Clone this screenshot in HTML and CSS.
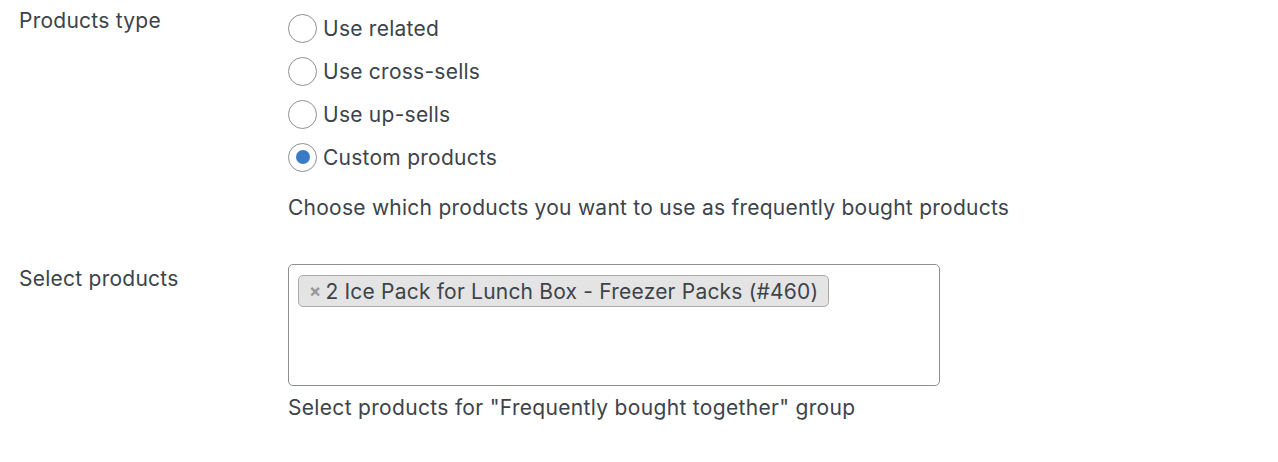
FILE: index.html
```html
<!DOCTYPE html>
<html>
<head>
<meta charset="utf-8">
<link rel="stylesheet" href="styles.css">
</head>
<body>
<div class="form">
  <div class="row row-type">
    <div class="label">Products type</div>
    <div class="field">
      <ul class="radios">
        <li><span class="radio"></span><span>Use related</span></li>
        <li><span class="radio"></span><span>Use cross-sells</span></li>
        <li><span class="radio"></span><span>Use up-sells</span></li>
        <li><span class="radio checked"></span><span>Custom products</span></li>
      </ul>
      <p class="desc desc-type">Choose which products you want to use as frequently bought products</p>
    </div>
  </div>
  <div class="row row-select">
    <div class="label">Select products</div>
    <div class="field">
      <div class="selectbox">
        <span class="tag"><span class="x">×</span>2 Ice Pack for Lunch Box - Freezer Packs (#460)</span>
      </div>
      <p class="desc desc-select">Select products for "Frequently bought together" group</p>
    </div>
  </div>
</div>
</body>
</html>
```

FILE: styles.css
```css
html, body {
  margin: 0;
  padding: 0;
  background: #fff;
}
body {
  font-family: Inter, "Liberation Sans", Arial, sans-serif;
  font-size: 21px;
  letter-spacing: 0.25px;
  color: #3c434a;
  width: 1278px;
  height: 462px;
  overflow: hidden;
}
.form {
  display: flex;
  flex-direction: column;
}
.row {
  display: grid;
  grid-template-columns: 288px 1fr;
}
.label {
  padding-left: 19px;
  line-height: 24px;
}
.row-type .label {
  padding-top: 9px;
}
.radios {
  list-style: none;
  margin: 0;
  padding: 14px 0 0 0;
  display: flex;
  flex-direction: column;
  gap: 15px;
}
.radios li {
  display: flex;
  align-items: center;
  height: 28px;
}
.radio {
  width: 29px;
  height: 29px;
  box-sizing: border-box;
  border: 1.5px solid #8c8f94;
  border-radius: 50%;
  margin-right: 6px;
  display: flex;
  align-items: center;
  justify-content: center;
  background: #fff;
}
.radio.checked::after {
  content: "";
  width: 14px;
  height: 14px;
  border-radius: 50%;
  background: #3a7bc8;
}
.desc {
  margin: 0;
  line-height: 24px;
}
.desc-type {
  padding-top: 25px;
}
.row-select {
  margin-top: 44px;
}
.row-select .label {
  padding-top: 3px;
}
.selectbox {
  width: 652px;
  height: 122px;
  box-sizing: border-box;
  border: 1px solid #8c8f94;
  border-radius: 5px;
  padding: 10px 9px;
}
.tag {
  display: inline-flex;
  align-items: center;
  height: 32px;
  box-sizing: border-box;
  background: #e4e4e4;
  border: 1px solid #aaa;
  border-radius: 5px;
  padding: 0 10px 0 10px;
  line-height: 1;
  letter-spacing: 0.2px;
}
.x {
  color: #999;
  font-weight: bold;
  font-size: 18px;
  margin-right: 4px;
}
.desc-select {
  padding-top: 10px;
  letter-spacing: 0.32px;
}
```
